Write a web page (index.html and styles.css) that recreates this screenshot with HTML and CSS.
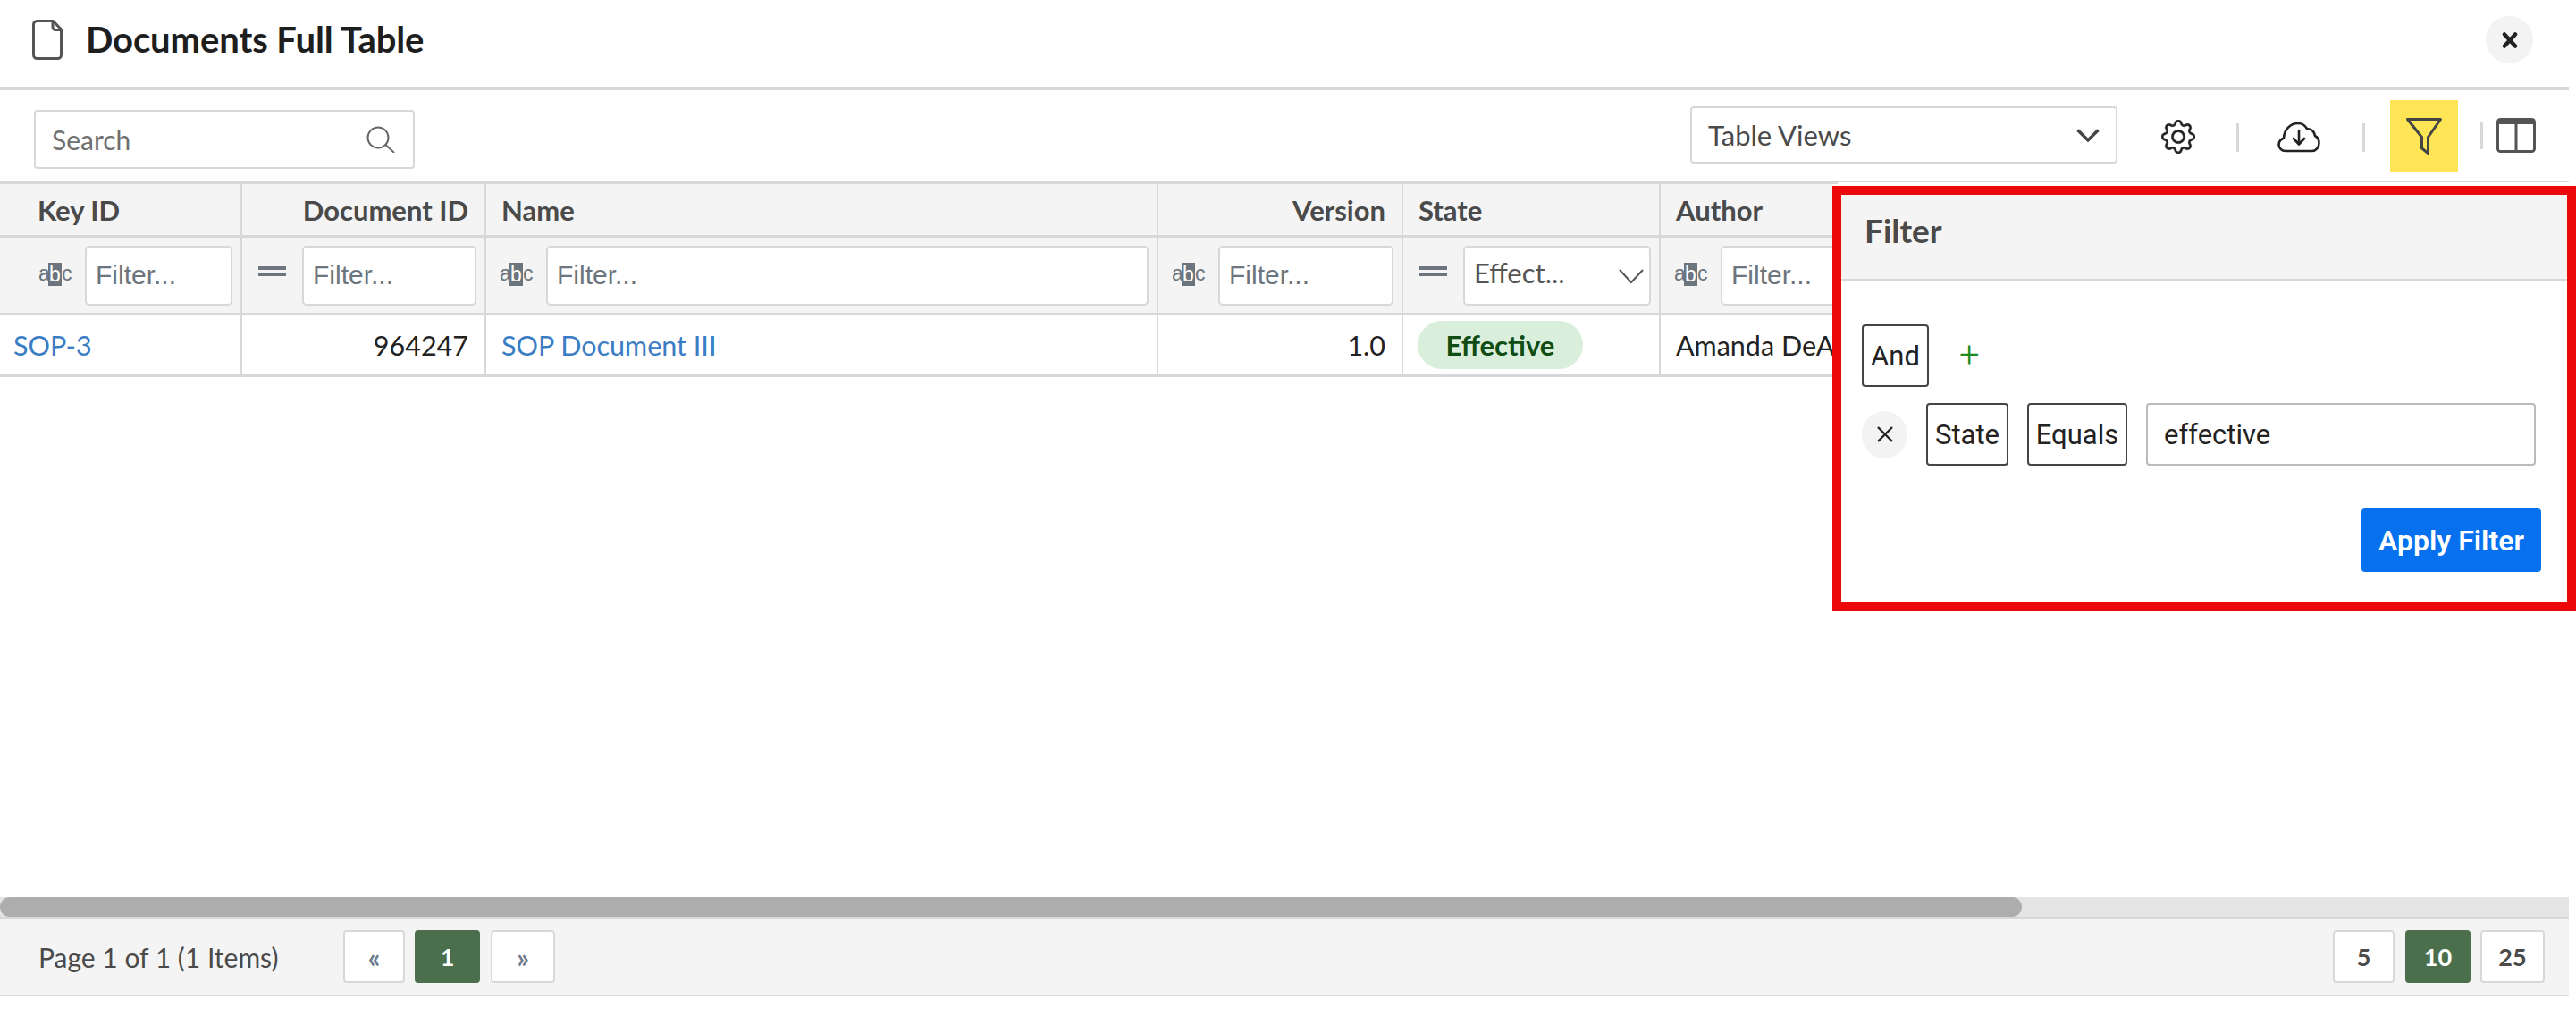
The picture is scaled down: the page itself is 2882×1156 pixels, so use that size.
FILE: index.html
```html
<!DOCTYPE html>
<html lang="en">
<head>
<meta charset="utf-8">
<title>Documents Full Table</title>
<link rel="stylesheet" href="styles.css">
</head>
<body>
<div class="page">
  <header class="title-bar">
    <svg class="doc-icon" viewBox="0 0 34 45" fill="none" stroke="#555" stroke-width="3" stroke-linejoin="round"><path d="M5 1.5h18.5L32.5 11v28.5a4 4 0 0 1-4 4H5.500a4 4 0 0 1-4-4V5.500a4 4 0 0 1 4-4z"/><path d="M23 2v6.500a3 3 0 0 0 3 3h6.500"/></svg>
    <h1 class="title">Documents Full Table</h1>
    <button class="close-btn" aria-label="Close"><svg viewBox="0 0 18 18" width="18" height="18" stroke="#222" stroke-width="4.500" stroke-linecap="round"><path d="M3 2.500l12 13M15 2.500l-12 13"/></svg></button>
  </header>
  <div class="toolbar">
    <div class="search">
      <span class="search-text">Search</span>
      <svg class="search-icon" viewBox="0 0 32 30" fill="none" stroke="#666" stroke-width="2"><circle cx="13" cy="13" r="11.500"/><path d="M21.500 21l9 8.500" stroke-linecap="round"/></svg>
    </div>
    <div class="tools">
      <div class="views"><span>Table Views</span><svg class="chev" viewBox="0 0 26 15" fill="none" stroke="#444" stroke-width="3.400"><path d="M1.500 1.500L13 13 24.500 1.500"/></svg></div>
      <svg class="gear" viewBox="0 0 16 16" fill="#222" stroke="#222" stroke-width=".2"><path d="M8 4.754a3.246 3.246 0 1 0 0 6.492 3.246 3.246 0 0 0 0-6.492M5.754 8a2.246 2.246 0 1 1 4.492 0 2.246 2.246 0 0 1-4.492 0"/><path d="M9.796 1.343c-.527-1.790-3.065-1.790-3.592 0l-.094.319a.873.873 0 0 1-1.255.52l-.292-.16c-1.640-.892-3.433.902-2.540 2.541l.159.292a.873.873 0 0 1-.52 1.255l-.319.094c-1.790.527-1.790 3.065 0 3.592l.319.094a.873.873 0 0 1 .52 1.255l-.16.292c-.892 1.640.901 3.434 2.541 2.540l.292-.159a.873.873 0 0 1 1.255.52l.094.319c.527 1.790 3.065 1.790 3.592 0l.094-.319a.873.873 0 0 1 1.255-.52l.292.16c1.640.893 3.434-.902 2.540-2.541l-.159-.292a.873.873 0 0 1 .52-1.255l.319-.094c1.790-.527 1.790-3.065 0-3.592l-.319-.094a.873.873 0 0 1-.52-1.255l.16-.292c.893-1.640-.902-3.433-2.541-2.540l-.292.159a.873.873 0 0 1-1.255-.52zm-2.633.283c.246-.835 1.428-.835 1.674 0l.094.319a1.873 1.873 0 0 0 2.693 1.115l.291-.16c.764-.415 1.600.42 1.184 1.185l-.159.292a1.873 1.873 0 0 0 1.116 2.692l.318.094c.835.246.835 1.428 0 1.674l-.319.094a1.873 1.873 0 0 0-1.115 2.693l.16.291c.415.764-.42 1.600-1.185 1.184l-.291-.159a1.873 1.873 0 0 0-2.693 1.116l-.094.318c-.246.835-1.428.835-1.674 0l-.094-.319a1.873 1.873 0 0 0-2.692-1.115l-.292.16c-.764.415-1.600-.42-1.184-1.185l.159-.291A1.873 1.873 0 0 0 1.945 8.930l-.319-.094c-.835-.246-.835-1.428 0-1.674l.319-.094A1.873 1.873 0 0 0 3.060 4.377l-.16-.292c-.415-.764.42-1.600 1.185-1.184l.292.159a1.873 1.873 0 0 0 2.692-1.115z"/></svg>
      <span class="sep sep-a"></span>
      <svg class="cloud" viewBox="0 0 48 34" fill="none" stroke="#222" stroke-width="2.600" stroke-linecap="round" stroke-linejoin="round"><path d="M9 32.500C4.500 32.500 1.500 29 1.500 25.500c0-3.500 2-6 5.500-7.500C7.500 9 14 1.500 23 1.500c4.500 0 8 2.500 10 6 5 0 8.500 3.500 9 8 3 1.500 4.500 4.500 4.500 8 0 5-3.500 9-8 9z"/><path d="M24 9.500v15M18 18.500l6 6.500 6-6.500"/></svg>
      <span class="sep sep-b"></span>
      <div class="filter-toggle"><svg class="funnel" viewBox="0 0 40 41" fill="none" stroke="#444" stroke-width="3" stroke-linejoin="round"><path d="M1.500 1.500h37L24.500 21.500v18l-7-5.500V21.500z"/></svg></div>
      <span class="sep sep-c"></span>
      <svg class="cols" viewBox="0 0 44 39"><rect x="1.500" y="1.500" width="41" height="36" rx="3" fill="none" stroke="#555" stroke-width="3"/><rect x="1" y="1" width="42" height="6" fill="#555"/><rect x="20.500" y="2" width="3" height="35" fill="#555"/></svg>
    </div>
  </div>
  <div class="table-area">
    <table class="grid">
      <colgroup><col class="c1"><col class="c2"><col class="c3"><col class="c4"><col class="c5"><col class="c6"></colgroup>
      <thead>
        <tr class="head-row">
          <th class="first-head">Key ID</th><th class="num">Document ID</th><th>Name</th><th class="num">Version</th><th>State</th><th class="last">Author</th>
        </tr>
        <tr class="filter-row">
          <td class="first-filter"><div class="fcell"><span class="abc"><i>a</i><b>b</b><i>c</i></span><input class="finput" placeholder="Filter..."></div></td>
          <td><div class="fcell"><span class="eq"></span><input class="finput" placeholder="Filter..."></div></td>
          <td><div class="fcell"><span class="abc"><i>a</i><b>b</b><i>c</i></span><input class="finput" placeholder="Filter..."></div></td>
          <td><div class="fcell"><span class="abc"><i>a</i><b>b</b><i>c</i></span><input class="finput" placeholder="Filter..."></div></td>
          <td><div class="fcell"><span class="eq"></span><div class="fselect"><span>Effect...</span><svg class="fchev" viewBox="0 0 28 17" fill="none" stroke="#555" stroke-width="2"><path d="M1 1l13 14L27 1"/></svg></div></div></td>
          <td class="last"><div class="fcell fcell-last"><span class="abc"><i>a</i><b>b</b><i>c</i></span><input class="finput" placeholder="Filter..."></div></td>
        </tr>
      </thead>
      <tbody>
        <tr class="data-row">
          <td class="first-data"><a class="link">SOP-3</a></td>
          <td class="num">964247</td>
          <td><a class="link">SOP Document III</a></td>
          <td class="num">1.0</td>
          <td class="state-cell"><span class="badge">Effective</span></td>
          <td class="last">Amanda DeA</td>
        </tr>
      </tbody>
    </table>
  </div>
  <div class="scrollbar"><div class="thumb"></div></div>
  <footer class="pager">
    <span class="page-info">Page 1 of 1 (1 Items)</span>
    <div class="pages">
      <span class="pbtn arrow a-prev">«</span>
      <span class="pbtn active p-one">1</span>
      <span class="pbtn arrow a-next">»</span>
    </div>
    <div class="sizes">
      <span class="pbtn s-5">5</span>
      <span class="pbtn active s-10">10</span>
      <span class="pbtn s-25">25</span>
    </div>
  </footer>
</div>
<aside class="filter-overlay">
  <div class="cover"></div>
  <div class="filter-panel">
    <div class="panel-head">Filter</div>
    <div class="panel-body">
      <div class="rule-top"><span class="chip chip-and">And</span><span class="plus">+</span></div>
      <div class="rule">
        <span class="remove"><svg viewBox="0 0 20 20" width="20" height="20" stroke="#222" stroke-width="2.400"><path d="M2 2l16 16M18 2L2 18"/></svg></span>
        <span class="chip chip-state">State</span>
        <span class="chip chip-eq">Equals</span>
        <div class="value">effective</div>
      </div>
      <div class="apply-row"><button class="apply">Apply Filter</button></div>
    </div>
  </div>
</aside>
</body>
</html>
```

FILE: styles.css
```css
* { box-sizing: border-box; }
html, body { margin: 0; padding: 0; background: #fff; }
body { width: 2882px; height: 1156px; overflow: hidden; position: relative; font-family: "Lato", sans-serif; color: #222; }
.page { width: 2874px; height: 1115px; display: flex; flex-direction: column; }

.title-bar { height: 101px; flex: none; display: flex; align-items: center; border-bottom: 4px solid #d8d8d8; padding: 0 40px 8px 36px; }
.doc-icon { width: 34px; height: 45px; margin-right: 26px; flex: none; }
.title { margin: 0 0 2px; font-size: 40px; font-weight: 700; color: #1e1e1e; flex: 1; letter-spacing: -0.1px; }
.close-btn { width: 53px; height: 53px; border: 0; border-radius: 50%; background: #f3f3f3; padding: 0; display: flex; align-items: center; justify-content: center; }

.toolbar { height: 101px; flex: none; display: flex; justify-content: space-between; }
.search { width: 426px; height: 66px; margin: 22px 0 0 38px; border: 2px solid #d8d8d8; border-radius: 4px; display: flex; align-items: center; justify-content: space-between; padding: 0 20px 0 18px; }
.search-text { font-size: 30px; color: #6f6f6f; }
.search-icon { width: 32px; height: 30px; }
.tools { display: flex; align-items: flex-start; position: relative; }
.views { width: 478px; height: 64px; margin-top: 18px; border: 2px solid #d8d8d8; border-radius: 4px; display: flex; align-items: center; justify-content: space-between; padding: 0 18px 0 18px; font-size: 31px; color: #4a4a4a; }
.chev { width: 26px; height: 15px; }
.gear { width: 38px; height: 38px; margin: 33px 0 0 49px; }
.sep { width: 3px; background: #d8d8d8; flex: none; }
.sep-a { height: 32px; margin: 37px 0 0 46px; }
.cloud { width: 48px; height: 35px; margin: 35px 0 0 43px; }
.sep-b { height: 32px; margin: 37px 0 0 47px; }
.filter-toggle { width: 76px; height: 80px; margin: 11px 0 0 28px; background: #fde556; display: flex; align-items: center; justify-content: center; }
.funnel { width: 40px; height: 41px; }
.sep-c { height: 30px; margin: 36px 0 0 25px; }
.cols { width: 44px; height: 39px; margin: 31px 37px 0 15px; }

.table-area { flex: 1; min-height: 0; border-top: 4px solid #d8d8d8; overflow: hidden; }
.grid { width: 2050px; table-layout: fixed; border-collapse: separate; border-spacing: 0; font-size: 31px; }
.c1 { width: 271px; } .c2 { width: 273px; } .c3 { width: 752px; } .c4 { width: 274px; } .c5 { width: 288px; } .c6 { width: 192px; }
.grid th, .grid td { border-right: 2px solid #d8d8d8; border-bottom: 3px solid #d8d8d8; padding: 0 18px 0 17px; text-align: left; white-space: nowrap; overflow: hidden; }
.grid th { font-weight: 700; color: #4a4a4a; }
.grid .num { text-align: right; }
.grid th.last, .grid td.last { border-right: 0; padding-right: 0; }
.head-row th { height: 60px; background: #f4f4f4; }
.grid th.first-head { padding-left: 42px; }
.filter-row td { height: 87px; background: #f4f4f4; padding: 0 9px 0 15px; }
.fcell { display: flex; align-items: center; gap: 15px; }
.fcell-last { width: 300px; }
.grid td.first-filter { padding-left: 43px; }
.abc { width: 37px; flex: none; font: 23px "Liberation Sans", sans-serif; color: #6c757d; display: flex; align-items: center; justify-content: center; margin-top: -3px; }
.abc i { font-style: normal; width: 11px; text-align: center; }
.abc b { background: #6c757d; color: #fff; font-weight: 400; height: 26px; line-height: 26px; width: 15px; text-align: center; }
.eq { width: 31px; height: 11px; flex: none; border-top: 4px solid #6c757d; border-bottom: 4px solid #6c757d; margin: -9px 3px 0; }
.finput { flex: 1; min-width: 0; width: 100%; height: 67px; border: 2px solid #d8d8d8; border-radius: 5px; background: #fff; padding: 0 10px; font: 30px "Liberation Sans", sans-serif; color: #6c757d; }
.finput::placeholder { color: #6c757d; opacity: 1; }
.fselect { flex: 1; min-width: 0; height: 67px; border: 2px solid #d8d8d8; border-radius: 5px; background: #fff; display: flex; align-items: center; justify-content: space-between; padding: 0 6px 6px 10px; font: 31px "Lato", sans-serif; color: #555; }
.fchev { width: 28px; height: 17px; margin-top: 8px; }
.data-row td { height: 69px; color: #222; font-size: 30.5px; }
.grid td.first-data { padding-left: 15px; }
.link { color: #3a7dc4; }
.grid td.state-cell { padding-left: 16px; }
.badge { display: inline-block; width: 185px; height: 54px; line-height: 54px; text-align: center; border-radius: 27px; background: #d9eedb; color: #0f4d14; font-size: 31px; font-weight: 700; vertical-align: middle; }

.scrollbar { height: 24px; flex: none; background: #e4e4e4; border-bottom: 2px solid #d8d8d8; }
.thumb { width: 2262px; height: 22px; background: #adadad; border-radius: 11px; }
.pager { height: 87px; flex: none; background: #f4f4f4; border-bottom: 2px solid #d8d8d8; display: flex; align-items: center; padding-left: 43px; }
.page-info { width: 341px; font-size: 30px; color: #4a4a4a; }
.pages, .sizes { display: flex; align-items: center; }
.sizes { margin-left: auto; margin-right: 27px; }
.pbtn { height: 59px; border: 2px solid #d8d8d8; border-radius: 4px; background: #fff; display: flex; align-items: center; justify-content: center; font-size: 27px; font-weight: 700; color: #4a4a4a; }
.pbtn.active { background: #4b6f4c; border-color: #4b6f4c; color: #fff; }
.arrow { color: #6c7a89; font-size: 30px; }
.a-prev { width: 69px; }
.p-one { width: 73px; margin: 0 12px 0 11px; }
.a-next { width: 72px; }
.s-5 { width: 69px; }
.s-10 { width: 73px; margin: 0 11px 0 12px; }
.s-25 { width: 72px; }

.filter-overlay { position: absolute; left: 2050px; top: 204px; width: 832px; height: 480px; display: flex; flex-direction: column; }
.cover { height: 4px; margin-left: 6px; background: #fff; flex: none; }
.filter-panel { flex: 1; border: 10px solid #eb0808; background: #fff; display: flex; flex-direction: column; font-family: "Roboto", sans-serif; }
.panel-head { height: 96px; flex: none; background: #f4f4f4; border-bottom: 2px solid #d8d8d8; padding: 0 26px 16px; display: flex; align-items: center; font: 700 37px "Lato", sans-serif; color: #4a4a4a; }
.panel-body { padding: 49px 29px 0 23px; }
.rule-top { display: flex; align-items: center; height: 70px; }
.chip { height: 70px; border: 2px solid #444; border-radius: 4px; display: flex; align-items: center; justify-content: center; font-size: 31px; color: #222; flex: none; }
.chip-and { width: 75px; }
.plus { margin-left: 34px; color: #1c8a1c; font-size: 40px; font-weight: 300; line-height: 1; width: 20px; text-align: center; }
.rule { display: flex; align-items: center; margin-top: 18px; gap: 21px; padding-right: 6px; }
.remove { width: 51px; height: 53px; border-radius: 50%; background: #f3f3f3; display: flex; align-items: center; justify-content: center; flex: none; }
.chip-state { width: 92px; }
.chip-eq { width: 112px; }
.value { flex: 1; height: 70px; border: 2px solid #bbb; border-radius: 4px; display: flex; align-items: center; padding: 0 18px; font-size: 31px; color: #222; }
.apply-row { display: flex; justify-content: flex-end; margin-top: 48px; }
.apply { width: 201px; height: 71px; border: 0; border-radius: 4px; background: #0670ee; color: #fff; font: 600 32px "Roboto", sans-serif; padding: 0; }
```
